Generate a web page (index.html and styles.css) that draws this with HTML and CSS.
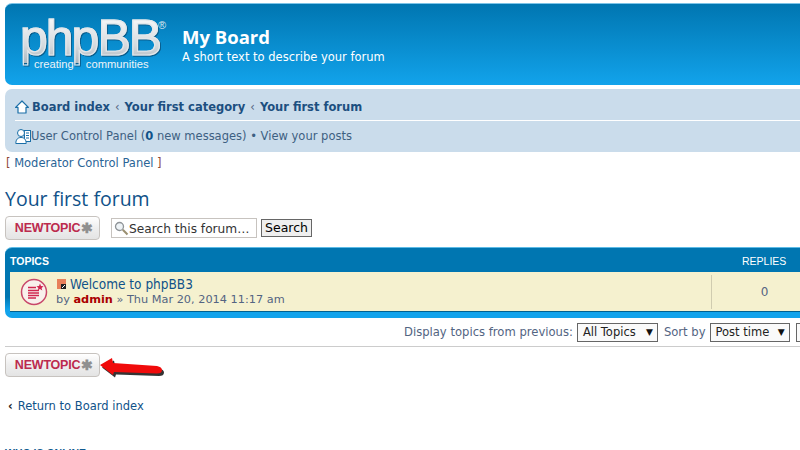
FILE: index.html
```html
<!DOCTYPE html>
<html lang="en">
<head>
<meta charset="utf-8">
<title>Your first forum</title>
<link rel="stylesheet" href="styles.css">
</head>
<body>
<div class="wrap">
  <header class="headerbar">
    <div class="logo">
      <div class="logo-main">phpBB</div>
      <span class="logo-reg">®</span>
      <div class="logo-sub"><span>creating</span><span>communities</span></div>
    </div>
    <div class="site">
      <h1>My Board</h1>
      <p>A short text to describe your forum</p>
    </div>
  </header>

  <nav class="navbar">
    <div class="crumbs">
      <svg class="ico-home" width="14" height="14" viewBox="0 0 14 14"><path d="M7 1 L13.400 7.400 H11 V13 H3 V7.400 H.6 Z" fill="#fff" stroke="#1a6fa8" stroke-width="1.200" stroke-linejoin="round"/></svg>
      <a>Board index</a><i>‹</i><a>Your first category</a><i>‹</i><a>Your first forum</a>
    </div>
    <div class="userline">
      <svg class="ico-user" width="16" height="17" viewBox="0 0 16 17"><rect x="9.500" y="2.500" width="6" height="11" fill="#fff" stroke="#1a6fa8"/><path d="M11 5h3M11 7.500h3M11 10h3" stroke="#1a6fa8"/><circle cx="6" cy="5" r="3.500" fill="#fff" stroke="#1a6fa8"/><path d="M.8 15.500c0-4 2-6 5.200-6s5.200 2 5.200 6z" fill="#fff" stroke="#1a6fa8"/></svg>
      <span>User Control Panel (<b>0</b> new messages) • View your posts</span>
    </div>
  </nav>

  <p class="modline"><em>[</em> Moderator Control Panel <em>]</em></p>

  <h2>Your first forum</h2>

  <div class="actions">
    <a class="btn">NEWTOPIC<span class="star">✱</span></a>
    <div class="searchbox">
      <svg width="15" height="15" viewBox="0 0 15 15"><circle cx="5.500" cy="5.500" r="4" fill="#eef3f6" stroke="#8f9498" stroke-width="1.300"/><path d="M8.800 8.800 L13.500 13.500" stroke="#9a8f70" stroke-width="2"/></svg>
      <span>Search this forum…</span>
    </div>
    <button class="searchbtn" type="button">Search</button>
  </div>

  <section class="forumbg">
    <div class="thead"><span>TOPICS</span><span class="th-replies">REPLIES</span></div>
    <div class="trow">
      <svg class="ico-topic" width="28" height="28" viewBox="0 0 28 28"><circle cx="14" cy="14" r="12.500" fill="#f8f0ec" stroke="#c8476a" stroke-width="1.500"/><path d="M8 9.500h8M8 12.500h11M8 15h11M8 17.500h11M8 20h8" stroke="#d0264f" stroke-width="1.300"/><path d="M20 5.500l1 2.500 2.600.2-2 1.700.7 2.600-2.300-1.400-2.300 1.400.7-2.600-2-1.700 2.600-.2z" fill="#d0264f"/></svg>
      <div class="tmain">
        <div class="ttitle">
          <svg width="9" height="10" viewBox="0 0 9 10"><rect width="9" height="10" fill="#e8805a"/><rect x="4" y="5" width="5" height="5" fill="#222"/><path d="M5 9l3-3" stroke="#fff"/></svg>
          <a>Welcome to phpBB3</a>
        </div>
        <div class="tmeta">by <b>admin</b> » Thu Mar 20, 2014 11:17 am</div>
      </div>
      <div class="tcount">0</div>
    </div>
  </section>

  <div class="sortbar">
    <label>Display topics from previous:</label>
    <div class="sel sel-a"><span>All Topics</span><i>▼</i></div>
    <label>Sort by</label>
    <div class="sel sel-b"><span>Post time</span><i>▼</i></div>
    <div class="sel sel-c"><span>Descending</span><i>▼</i></div>
  </div>

  <hr class="rule">

  <div class="actions-bottom">
    <a class="btn">NEWTOPIC<span class="star">✱</span></a>
    <svg class="arrow" width="76" height="30" viewBox="0 0 76 30"><path d="M7 13 L19 6 L20 11 L64 14 Q69 15 69 18 Q69 21.500 64 21.500 L21 20 L20 23 Z" fill="#111" transform="translate(2 2.500)" opacity=".85"/><path d="M7 13 L19 6 L20 11 L64 14 Q69 15 69 18 Q69 21.500 64 21.500 L21 20 L20 23 Z" fill="#f00b0b"/></svg>
  </div>

  <p class="returnline"><span class="dots">‹</span><a>Return to Board index</a></p>

  <h3>WHO IS ONLINE</h3>
</div>
</body>
</html>
```
FILE: styles.css
```css
html, body { margin: 0; padding: 0; background: #fff; overflow: hidden; height: 450px; }
body { font-family: "DejaVu Sans", Verdana, sans-serif; color: #536482; }
.wrap { width: 1000px; padding: 3px 0 0 5px; box-sizing: content-box; }
a { color: #105289; }

.headerbar { height: 82px; box-sizing: border-box; border-radius: 7px; background: linear-gradient(#0076b1, #12a3eb); display: flex; color: #fff; border-top: 1px solid #7cc4e8; }
.logo { width: 177px; box-sizing: border-box; flex: none; position: relative; padding-left: 15px; }
.logo-main { width: 145px; font: 400 50px/50px "Liberation Sans", Arial, sans-serif; letter-spacing: -2px; margin-top: 9px; background: linear-gradient(#fdfdfd, #d5dade 65%, #aeb8c0); -webkit-background-clip: text; background-clip: text; color: transparent; -webkit-text-stroke: 1.200px #e3e7ea; filter: drop-shadow(1px 1px 0 #0a5f8f); }
.logo-reg { position: absolute; left: 153px; top: 14px; font: 400 11px/14px "Liberation Sans", Arial, sans-serif; color: #dfe8ee; }
.logo-sub { position: absolute; left: 29px; top: 53px; font: 400 11.200px/14px "Liberation Sans", Arial, sans-serif; display: flex; gap: 12px; color: #eef4f8; }
.site { padding-top: 21px; }
.site h1 { margin: 0; font: 700 18.500px/24px "Open Sans", sans-serif; }
.site p { margin: 0; font: 400 11.500px/16px "DejaVu Sans", sans-serif; }

.navbar { margin-top: 4px; height: 63px; box-sizing: border-box; border-radius: 7px; background: #cadceb; padding: 0 10px; }
.crumbs { height: 32px; border-bottom: 1px solid #fff; display: flex; align-items: center; font-size: 11.500px; font-weight: 700; padding-top: 4px; box-sizing: border-box; }
.crumbs a { color: #1c4f80; }
.crumbs i { font-style: normal; font-weight: 400; margin: 0 5px; color: #536482; }
.ico-home { margin-right: 3px; }
.userline { height: 30px; display: flex; align-items: center; font-size: 11.500px; color: #536482; }
.userline span { color: #3d6082; }
.userline b { color: #105289; }

.modline { margin: 4px 0 0 1px; font-size: 11.500px; line-height: 15px; color: #2a6496; }
.modline em { font-style: normal; color: #8f4a3a; }

h2 { margin: 15px 0 0; font: 400 19.500px/26px "Open Sans", sans-serif; color: #105289; }

.actions { display: flex; align-items: center; margin-top: 4px; height: 24px; }
.btn { width: 95px; height: 24px; box-sizing: border-box; display: flex; align-items: center; justify-content: center; padding-left: 3px; border: 1px solid #c7c3bf; border-radius: 4px; background: linear-gradient(#fff, #eeeeee 50%, #e4e4e4); font: 700 12.500px/1 "Liberation Sans", Arial, sans-serif; color: #bc2a4d; letter-spacing: -.2px; }
.star { font-size: 14px; color: #8f8f8f; margin-left: 1px; }
.searchbox { margin-left: 11px; width: 146px; height: 20px; box-sizing: border-box; border: 1px solid #c7c3bf; background: #fff; display: flex; align-items: center; padding: 1px 0 0 2px; font-size: 12.200px; color: #333; }
.searchbtn { margin: 0 0 0 4px; padding: 1px 0 0; width: 51px; height: 18px; box-sizing: border-box; border: 1px solid #666; background: #efefef; font: 400 12.500px/1 "DejaVu Sans", sans-serif; color: #000; }

.forumbg { margin-top: 7px; height: 71px; box-sizing: border-box; border-radius: 7px; background: linear-gradient(#0076b1 70%, #12a3eb 88%); border-top: 1px solid #5dbbe6; padding: 0 0 6px 5px; display: flex; flex-direction: column; }
.thead { height: 24px; display: flex; align-items: center; justify-content: space-between; font: 700 10.500px/1 "Liberation Sans", Arial, sans-serif; color: #fff; padding-top: 3px; box-sizing: border-box; }
.th-replies { width: 289px; font-weight: 400; font-size: 10.500px; padding-left: 26px; box-sizing: border-box; }
.trow { flex: 1; background: #f5f1cf; display: flex; align-items: center; border-bottom: 1px solid #00608f; }
.ico-topic { margin-left: 10px; flex: none; }
.tmain { margin-left: 8px; width: 655px; flex: none; }
.ttitle { display: flex; align-items: center; gap: 4px; font: 400 13.500px/16px "DejaVu Sans Condensed", "DejaVu Sans", sans-serif; margin-left: 1px; }
.ttitle a { color: #105289; }
.tmeta { font-size: 11.300px; line-height: 16px; color: #536482; }
.tmeta b { color: #aa0000; }
.tcount { height: 34px; border-left: 1px solid #d0ccb0; width: 105px; text-align: center; line-height: 34px; font-size: 12px; color: #536482; }

.sortbar { display: flex; align-items: center; height: 22px; margin-top: 3px; padding-left: 399px; font-size: 11.600px; color: #536482; }
.sel { height: 19px; box-sizing: border-box; border: 1px solid #666; background: #fafafa; display: flex; align-items: center; justify-content: space-between; padding: 0 4px 0 5px; font-size: 11.500px; color: #222; flex: none; }
.sel i { font-style: normal; font-size: 9px; color: #111; }
.sel-a { width: 81px; margin: 0 6px 0 4px; }
.sel-b { width: 80px; margin: 0 6px 0 4px; }
.sel-c { width: 100px; }

.rule { margin: 3px 0 0; border: 0; border-top: 1px solid #ccc; height: 0; }

.actions-bottom { position: relative; margin-top: 6px; height: 25px; }
.arrow { position: absolute; left: 88px; top: -1px; }

.returnline { margin: 20px 0 0; font-size: 11.500px; line-height: 16px; }
.returnline a { color: #105289; }
.dots { font-weight: 700; color: #222; margin: 0 5px 0 3px; }

h3 { margin: 32px 0 0; font: 700 10.500px/14px "Liberation Sans", Arial, sans-serif; color: #115a8f; }
```
